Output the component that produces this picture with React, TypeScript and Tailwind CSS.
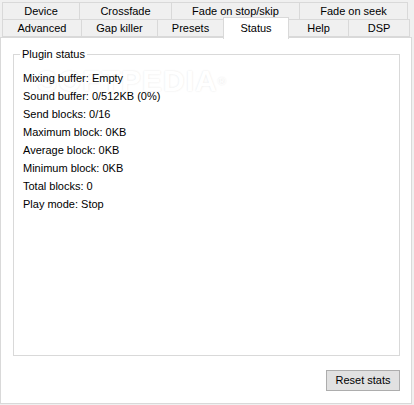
const topTabs = [
  { label: "Device", w: "w-[78px]" },
  { label: "Crossfade", w: "w-[93px]" },
  { label: "Fade on stop/skip", w: "w-[129px]" },
  { label: "Fade on seek", w: "w-[109px]" },
];

const stats = [
  "Mixing buffer: Empty",
  "Sound buffer: 0/512KB (0%)",
  "Send blocks: 0/16",
  "Maximum block: 0KB",
  "Average block: 0KB",
  "Minimum block: 0KB",
  "Total blocks: 0",
  "Play mode: Stop",
];

const Tab = ({ label, w }: { label: string; w: string }) => (
  <div
    className={`${w} h-[18px] flex items-center justify-center border border-[#d9d9d9] -ml-px first:ml-0 bg-[#f0f0f0] text-black`}
  >
    {label}
  </div>
);

const App = () => {
  return (
    <div
      className="w-[414px] h-[405px] bg-[#f0f0f0] text-[11px] text-black overflow-hidden"
      style={{ fontFamily: '"Liberation Sans", Arial, sans-serif' }}
    >
      <div className="flex pt-[2px] pl-[2px]">
        {topTabs.map((t) => (
          <Tab key={t.label} label={t.label} w={t.w} />
        ))}
      </div>
      <div className="flex pl-[2px] -mt-px h-[19px]">
        <Tab label="Advanced" w="w-[80px]" />
        <Tab label="Gap killer" w="w-[77px]" />
        <Tab label="Presets" w="w-[67px]" />
        <div className="relative z-10 -ml-px -mt-[2px] w-[66px] h-[22px] flex items-start pt-[2px] justify-center border border-b-0 border-[#d9d9d9] bg-white">
          Status
        </div>
        <Tab label="Help" w="w-[61px]" />
        <Tab label="DSP" w="w-[62px]" />
      </div>
      <div className="relative w-[412px] h-[367px] -mt-px border border-[#d9d9d9] bg-white">
        {/* watermark */}
        <div
          className="absolute left-[36px] top-[26px] text-[30px] font-bold leading-[34px] tracking-[1px] text-white select-none pointer-events-none"
          style={{ textShadow: "0 0 2px #e4e4e4" }}
        >
          SOFTPEDIA<span className="text-[11px] align-top">®</span>
        </div>
        <div className="relative ml-[12px] mt-[16px] w-[387px] h-[302px] border border-[#d9d9d9] pl-[9px] pt-[14px]">
          <span className="absolute left-[6px] -top-[8px] px-[2px] bg-white leading-[14px]">
            Plugin status
          </span>
          <div className="relative flex flex-col">
            {stats.map((s) => (
              <p key={s} className="leading-[18px]">
                {s}
              </p>
            ))}
          </div>
        </div>
        <div className="flex justify-end pr-[11px] mt-[14px]">
          <button className="w-[74px] h-[21px] bg-[#e1e1e1] border border-[#adadad] text-[11px] text-black">
            Reset stats
          </button>
        </div>
      </div>
    </div>
  );
};

export default App;
